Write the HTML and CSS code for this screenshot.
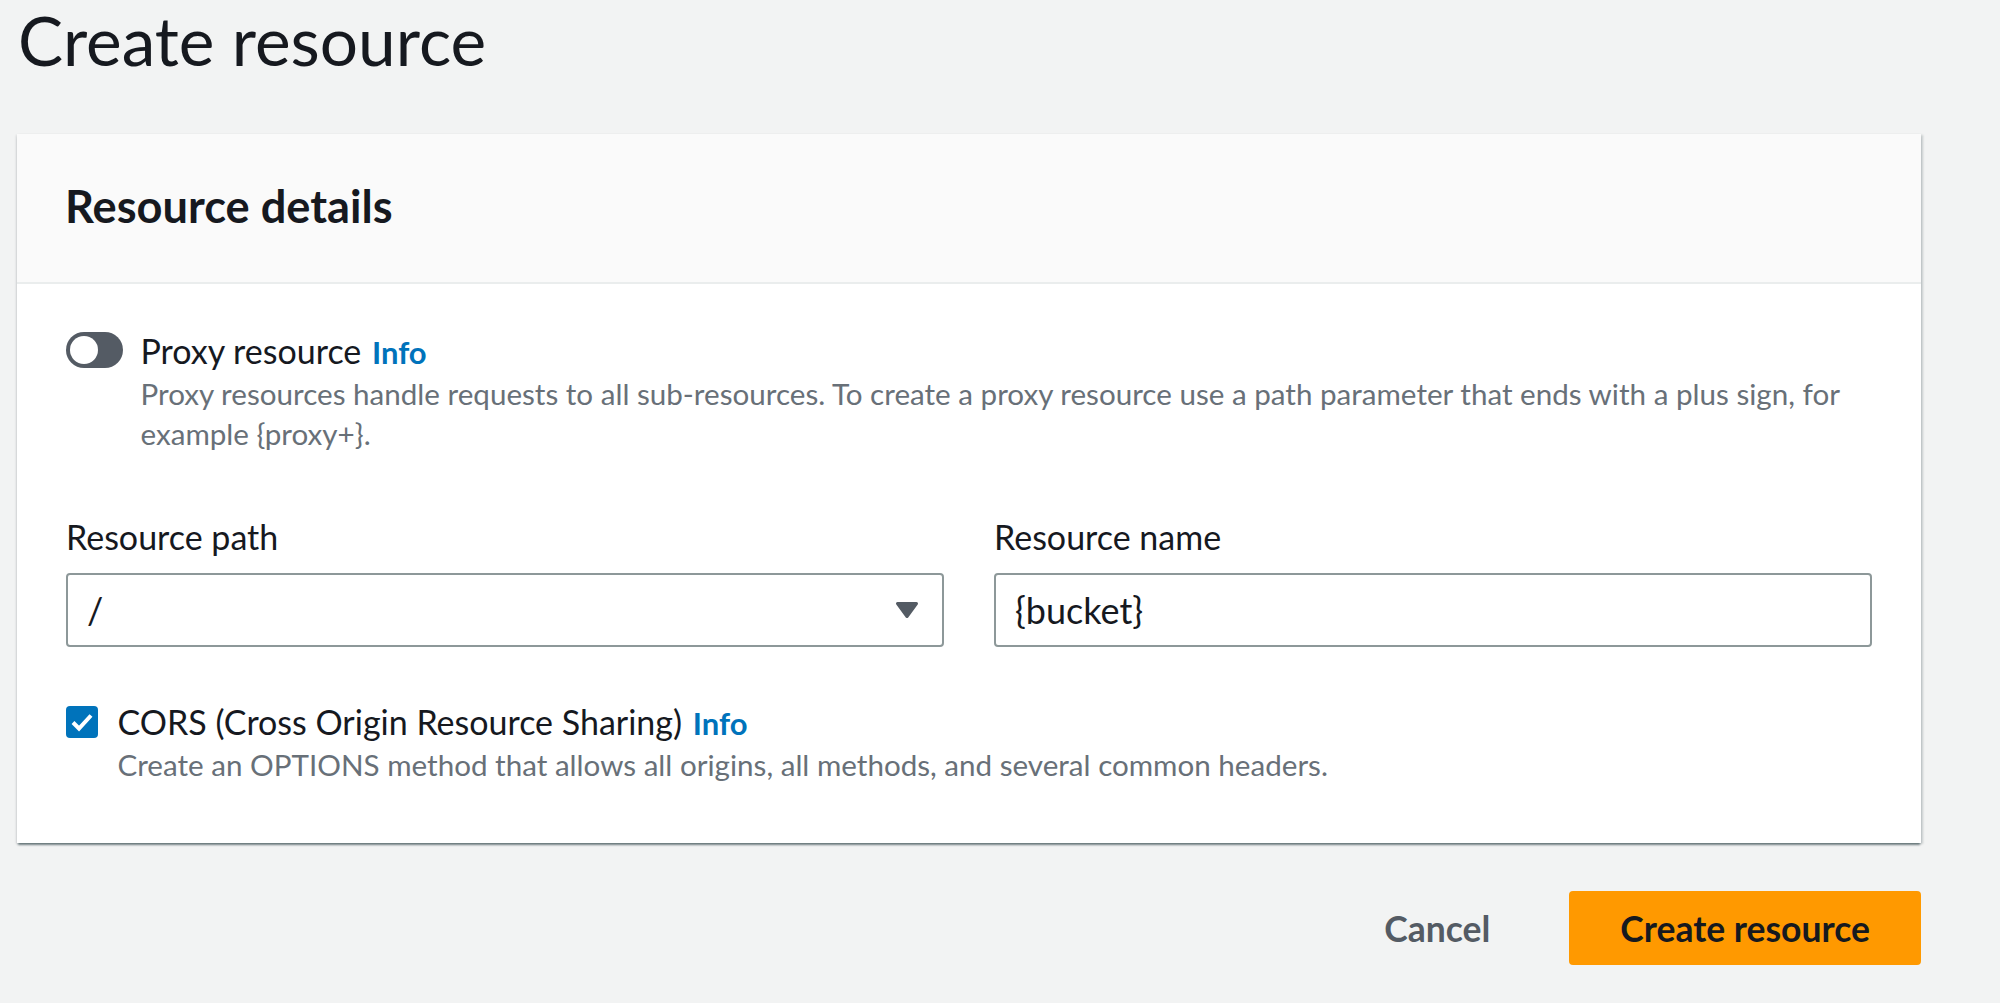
FILE: index.html
```html
<!DOCTYPE html>
<html lang="en">
<head>
<meta charset="utf-8">
<title>Create resource</title>
<link rel="stylesheet" href="styles.css">
</head>
<body>
<div class="page">
  <h1 class="title">Create resource</h1>
  <div class="card">
    <div class="card-header">
      <h2 class="card-title">Resource details</h2>
    </div>
    <div class="card-body">
      <div class="control-row toggle-row">
        <span class="toggle"><span class="knob"></span></span>
        <div class="control-text">
          <div class="control-label">Proxy resource <a class="info">Info</a></div>
          <div class="control-desc">Proxy resources handle requests to all sub-resources. To create a proxy resource use a path parameter that ends with a plus sign, for example {proxy+}.</div>
        </div>
      </div>
      <div class="fields">
        <div class="field">
          <div class="field-label">Resource path</div>
          <div class="box select">
            <span class="value">/</span>
            <svg class="caret" width="24" height="18" viewBox="0 0 24 18"><path d="M2.5 2.5 H21.5 L12 15.5 Z" fill="#545b64" stroke="#545b64" stroke-width="3" stroke-linejoin="round"/></svg>
          </div>
        </div>
        <div class="field">
          <div class="field-label">Resource name</div>
          <div class="box input"><span class="value">{bucket}</span></div>
        </div>
      </div>
      <div class="control-row checkbox-row">
        <span class="checkbox">
          <svg width="32" height="32" viewBox="0 0 32 32"><polyline points="7,16.5 13,22.5 25,9.5" fill="none" stroke="#ffffff" stroke-width="4"/></svg>
        </span>
        <div class="control-text">
          <div class="control-label">CORS (Cross Origin Resource Sharing) <a class="info">Info</a></div>
          <div class="control-desc">Create an OPTIONS method that allows all origins, all methods, and several common headers.</div>
        </div>
      </div>
    </div>
  </div>
  <div class="actions">
    <button class="btn btn-link">Cancel</button>
    <button class="btn btn-primary">Create resource</button>
  </div>
</div>
</body>
</html>
```
FILE: styles.css
```css
html, body {
  margin: 0;
  padding: 0;
  background: #f2f3f3;
}
body {
  font-family: Lato, "Open Sans", sans-serif;
  color: #16191f;
}
.page {
  width: 1904px;
  padding-left: 17px;
}
.title {
  margin: 0;
  font-size: 67.5px;
  font-weight: 400;
  line-height: 80px;
  color: #16191f;
  padding-left: 1px;
}
.card {
  margin-top: 54px;
  background: #ffffff;
  box-shadow: 0 3px 2px -1px rgba(0, 28, 36, 0.45), 2px 1px 2px 0 rgba(0, 28, 36, 0.18), -1px 1px 2px 0 rgba(0, 28, 36, 0.12);
}
.card-header {
  background: #fafafa;
  border-bottom: 2px solid #eaeded;
  padding: 45px 48px 49px 48px;
}
.card-title {
  margin: 0;
  font-size: 45.2px;
  font-weight: 700;
  line-height: 54px;
  color: #16191f;
}
.card-body {
  padding: 47px 49px 58px 49px;
}
.control-row {
  display: flex;
  align-items: flex-start;
}
.toggle-row {
  gap: 17.5px;
}
.toggle {
  flex: none;
  width: 57px;
  height: 36px;
  margin-top: 1px;
  border-radius: 18px;
  background: #545b64;
  display: flex;
  align-items: center;
  padding-left: 4px;
  box-sizing: border-box;
}
.knob {
  width: 28px;
  height: 28px;
  border-radius: 50%;
  background: #ffffff;
}
.control-label {
  font-size: 34px;
  line-height: 40px;
  color: #16191f;
  white-space: nowrap;
}
.info {
  font-size: 31px;
  font-weight: 700;
  color: #0073bb;
  margin-left: 2px;
}
.control-desc {
  margin-top: 2px;
  font-size: 29.6px;
  line-height: 40px;
  color: #687078;
  max-width: 1731px;
}
.fields {
  display: grid;
  grid-template-columns: 1fr 1fr;
  gap: 50px;
  margin-top: 63px;
}
.field-label {
  font-size: 34px;
  line-height: 40px;
  color: #16191f;
  margin-bottom: 16px;
}
.box {
  height: 74px;
  box-sizing: border-box;
  border: 2px solid #8d9899;
  border-radius: 4px;
  background: #ffffff;
  display: flex;
  align-items: center;
  justify-content: space-between;
  padding: 0 23px 0 19px;
  font-size: 36px;
  color: #16191f;
}
.caret {
  display: block;
}
.checkbox-row {
  margin-top: 55px;
  gap: 19.5px;
}
.checkbox {
  flex: none;
  width: 32px;
  height: 32px;
  margin-top: 4px;
  border-radius: 4px;
  background: #0073bb;
  display: block;
}
.checkbox svg {
  display: block;
}
.actions {
  display: flex;
  justify-content: flex-end;
  align-items: center;
  gap: 39px;
  margin-top: 48px;
}
.btn {
  font-family: Lato, "Open Sans", sans-serif;
  font-size: 35.5px;
  font-weight: 700;
  height: 74px;
  border: none;
  border-radius: 4px;
  cursor: pointer;
}
.btn-link {
  background: transparent;
  color: #545b64;
  padding: 0 40px;
}
.btn-primary {
  background: #ff9900;
  color: #16191f;
  padding: 0 51px;
}
```
